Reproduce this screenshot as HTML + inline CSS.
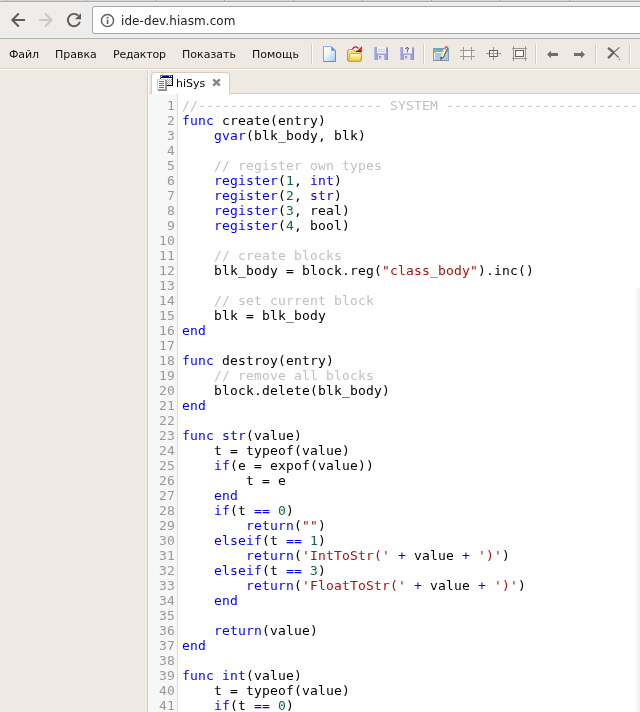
<!DOCTYPE html>
<html><head><meta charset="utf-8"><title>hiSys</title>
<style>
html,body{margin:0;padding:0;}
body{width:640px;height:712px;overflow:hidden;position:relative;background:#eee9e3;font-family:"DejaVu Sans","Liberation Sans",sans-serif;}
svg{position:absolute;overflow:visible;}
#tabstrip{position:absolute;left:0;top:0;width:640px;height:1px;background:#d9d9d9;border-bottom:1px solid #a9a9a9;}
#tabstrip i{position:absolute;top:0;width:1px;height:1px;background:#a9a9a9;}
#chrome{position:absolute;left:0;top:2px;width:640px;height:36px;background:#eeedeb;border-bottom:1px solid #b3b2b3;z-index:2;box-shadow:inset 0 1px 0 #f3f2f1;}
#url{position:absolute;left:92px;top:4px;width:560px;height:26px;background:#fff;border:1px solid #a6a6a6;border-radius:2.500px;}
#url span{position:absolute;left:28px;top:7px;letter-spacing:0.070px;font-size:12px;line-height:15px;color:#222;white-space:nowrap;}
#menubar{position:absolute;left:0;top:38px;width:640px;height:30px;background:#eee9e3;border-bottom:1px solid #dfd2c4;}
#menubar .m{position:absolute;top:10px;font-size:11px;line-height:13px;color:#111;white-space:nowrap;}
.sep{position:absolute;top:6px;width:1px;height:20px;background:#dacdbf;border-right:1px solid #fff;}
#hl{position:absolute;left:0;top:69px;width:640px;height:1px;background:#fff;}
#vsep{position:absolute;left:147px;top:70px;width:1px;height:642px;background:#dacdbf;border-right:1px solid #fff;}
#tabline{position:absolute;left:149px;top:93px;width:491px;height:1px;background:#dacdbf;}
#tab{position:absolute;left:151px;top:72px;width:79px;height:22px;background:#fff;border:1px solid #dacdbf;border-bottom:none;border-radius:4px 4px 0 0;box-sizing:border-box;}
#tab span{position:absolute;left:24px;top:4px;font-size:11px;line-height:13px;color:#000;}
#editor{position:absolute;left:148px;top:94px;width:492px;height:618px;background:#fff;}
#gutter{position:absolute;left:0;top:0;width:29px;height:618px;background:#f7f7f7;border-right:1px solid #ddd;}
#rstrip{position:absolute;left:488px;top:194px;width:4px;height:424px;background:linear-gradient(90deg,#f9f9f9,#f2f2f2);}
#code{position:absolute;left:0;top:4px;font-family:"DejaVu Sans Mono","Liberation Mono",monospace;font-size:13px;line-height:15px;letter-spacing:0.1733px;white-space:pre;color:#000;}
.ln{height:15px;position:relative;}
.no{position:absolute;left:0;width:27px;text-align:right;color:#999;}
.tx{position:absolute;left:34px;}
.c{color:#c0c0c0}.s{color:#a11}.n{color:#164}.k{color:#00f}.d{color:#00f}.t{color:#00d}
#root{position:absolute;left:0;top:0;width:640px;height:712px;will-change:transform;background:#eee9e3;}
</style></head><body><div id="root">
<div id="tabstrip"><i style="left:6px"></i><i style="left:86px"></i><i style="left:155px"></i><i style="left:224px"></i><i style="left:293px"></i><i style="left:362px"></i><i style="left:431px"></i><i style="left:500px"></i><i style="left:569px"></i></div>
<div id="chrome">
<svg style="left:0;top:0" width="92" height="36" viewBox="0 0 92 36"><g fill="none" stroke="#5d5d5d" stroke-width="2"><path d="M13.200 18H25M18.750 11.550L12.300 18L18.750 24.450"/></g><g fill="none" stroke="#c8c8c8" stroke-width="2"><path d="M39.200 18H50.800M45.150 11.550L51.600 18L45.150 24.450"/></g><path d="M78.330 13.670A6.125 6.125 0 1 0 79.870 19.750" fill="none" stroke="#5d5d5d" stroke-width="1.950"/><path d="M81 11.200V17.300H74.900Z" fill="#5d5d5d"/></svg>
<div id="url">
<svg style="left:6.500px;top:5.500px" width="15" height="15" viewBox="0 0 15 15"><circle cx="7.500" cy="7.500" r="6.050" fill="none" stroke="#626262" stroke-width="1.500"/><rect x="6.700" y="6.600" width="1.700" height="4.400" fill="#626262"/><rect x="6.700" y="3.900" width="1.700" height="1.600" fill="#626262"/></svg>
<span>ide-dev.hiasm.com</span></div>
</div>
<div id="menubar">
<span class="m" style="left:9px;letter-spacing:-0.150px">Файл</span>
<span class="m" style="left:55px">Правка</span>
<span class="m" style="left:113px;letter-spacing:-0.220px">Редактор</span>
<span class="m" style="left:182px">Показать</span>
<span class="m" style="left:252px">Помощь</span>
<div class="sep" style="left:311px"></div>
<div class="sep" style="left:423px"></div>
<div class="sep" style="left:535px"></div>
<div class="sep" style="left:595px"></div>
<div class="sep" style="left:629px"></div>
<svg style="left:321px;top:8px" width="16" height="16" viewBox="0 0 16 16"><defs><linearGradient id="gdoc" x1="0" y1="0" x2="1" y2="1"><stop offset="0" stop-color="#fffef2"/><stop offset="0.400" stop-color="#f2f6fa"/><stop offset="1" stop-color="#9ccaf0"/></linearGradient></defs><path d="M2.500 0.500H10.500L14.500 4.500V15.500H2.500Z" fill="url(#gdoc)" stroke="#9cb0ea" stroke-width="1"/><path d="M14.500 4.500V15.500H2.500" fill="none" stroke="#8080c8" stroke-width="1"/><path d="M2.500 15.500V0.500" fill="none" stroke="#8c9ce0" stroke-width="1"/><path d="M10.500 0.500V4.500H14.500Z" fill="#4f93ec" stroke="#7c98e2" stroke-width="0.600"/></svg>
<svg style="left:347px;top:8px" width="16" height="16" viewBox="0 0 16 16"><defs><linearGradient id="gfol" x1="0" y1="0" x2="0" y2="1"><stop offset="0" stop-color="#fffde6"/><stop offset="0.450" stop-color="#fbe684"/><stop offset="1" stop-color="#ecc648"/></linearGradient></defs><path d="M0.500 5.500Q0.500 3.500 2.500 3.500H5.500Q6.500 3.500 7 4.500Q7.300 5.500 8.500 5.500H12Q13.500 5.500 13.500 7V7.500Q14.800 7.700 14.500 9V13.500Q14.500 15.500 12.500 15.500H2.500Q0.500 15.500 0.500 13.500Z" fill="#f6dc74" stroke="#c69c1a" stroke-width="1"/><path d="M1.800 5.200Q2 4.600 2.800 4.600H5.200" fill="none" stroke="#fffbe0" stroke-width="1"/><path d="M3.600 7.500H13.500Q14.700 7.500 14.500 9L13.800 14Q13.600 15.300 12.200 15.300H2.800Q1.500 15.300 1.800 14L2.600 8.600Q2.800 7.500 3.600 7.500Z" fill="url(#gfol)" stroke="#cca422" stroke-width="0.900"/><path d="M5.400 2.800Q8.200 -1 11.400 2.400" fill="none" stroke="#c01414" stroke-width="1.300"/><path d="M10.300 4.900L14.900 -0.100V4.900Z" fill="#e81c10"/><path d="M13.200 4.500L14.300 2.500V4.500Z" fill="#ff7a18"/><path d="M9 5.300H14.900" stroke="#181010" stroke-width="1"/></svg>
<svg style="left:373px;top:8px" width="16" height="16" viewBox="0 0 16 16"><path d="M1 1H14L15 2V14H2L1 13Z" fill="#9f9fda"/><rect x="1" y="1" width="1.200" height="12" fill="#b9b9e8"/><rect x="13.800" y="2" width="1.200" height="12" fill="#8b8bcb"/><rect x="4" y="1" width="9" height="6.500" fill="#f1f1f1"/><rect x="5" y="3" width="7" height="0.800" fill="#c4c4cf"/><rect x="5" y="5" width="7" height="0.800" fill="#c4c4cf"/><rect x="5" y="9" width="6.300" height="5" fill="#e6e6e8"/><path d="M6 10H8.200V10.500L6 13Z" fill="#9090d4"/><path d="M8.200 10.500V13H6Z" fill="#b4b4e4"/></svg>
<svg style="left:399px;top:8px" width="16" height="16" viewBox="0 0 16 16"><path d="M1 1H14L15 2V14H2L1 13Z" fill="#9f9fda"/><rect x="1" y="1" width="1.200" height="12" fill="#b9b9e8"/><rect x="13.800" y="2" width="1.200" height="12" fill="#8b8bcb"/><rect x="4" y="1" width="9" height="6.500" fill="#f1f1f1"/><path d="M6.700 3Q6.900 1.700 8.100 1.700Q9.500 1.700 9.500 2.700Q9.500 3.400 8.400 4V4.800M8.400 5.500V6.400" fill="none" stroke="#333" stroke-width="1"/><path d="M4.300 5.200H6.200" stroke="#c4c4cf" stroke-width="0.800"/><rect x="5" y="9" width="6.300" height="5" fill="#e6e6e8"/><path d="M6 10H8.200V10.500L6 13Z" fill="#9090d4"/><path d="M8.200 10.500V13H6Z" fill="#b4b4e4"/></svg>
<svg style="left:433px;top:8px" width="16" height="16" viewBox="0 0 16 16"><rect x="0.500" y="2.500" width="15" height="12" fill="#afc5e5" stroke="#7d9fba" stroke-width="1"/><path d="M0.500 14.500H15.500" stroke="#8f9296" stroke-width="1"/><rect x="1" y="3" width="14" height="3" fill="#5ab8c1"/><rect x="2" y="4" width="1.300" height="1.200" fill="#e6c450"/><rect x="1.200" y="6" width="1.600" height="1" fill="#e6c450"/><path d="M1.500 7V13.800" stroke="#e2f5f8" stroke-width="1"/><path d="M2.800 6.500H13" stroke="#e6f7fb" stroke-width="1"/><path d="M11.010 2.630L13.750 3.850L10.270 11.610L7.530 10.390Z" fill="#fdfdf4"/><path d="M11.500 2.850L8.020 10.600" stroke="#f5ea30" stroke-width="1.200"/><path d="M13.750 3.850L10.270 11.610" stroke="#58524c" stroke-width="1"/><path d="M7.530 10.390L10.270 11.610L7.400 14.500Z" fill="#57514b"/><path d="M11.010 2.630L12 0.400Q12.600 -0.300 13.700 0.100Q15 0.600 14.900 1.600L13.750 3.850Z" fill="#e2544e"/><path d="M12.500 2.900L13.900 3.500L14.400 2.300L13.200 1.600Z" fill="#fff"/><path d="M14.900 1.600L13.750 3.850" stroke="#58524c" stroke-width="0.800"/></svg>
<svg style="left:459px;top:8px" width="16" height="16" viewBox="0 0 16 16" shape-rendering="crispEdges"><rect x="5" y="5" width="7" height="5" fill="#f8f4f0"/><rect x="4" y="1" width="1" height="13" fill="#9c9894"/><rect x="12" y="1" width="1" height="13" fill="#9c9894"/><rect x="1" y="4" width="15" height="1" fill="#9c9894"/><rect x="1" y="10" width="15" height="1" fill="#9c9894"/></svg>
<svg style="left:485px;top:8px" width="16" height="16" viewBox="0 0 16 16" shape-rendering="crispEdges"><rect x="4" y="4" width="9" height="7" fill="#f8f4f0"/><rect x="8" y="1" width="1" height="13" fill="#9c9894"/><rect x="1" y="7" width="15" height="1" fill="#9c9894"/><path d="M4 4H13V11H4ZM5 5V10H12V5Z" fill="#66625e" fill-rule="evenodd"/></svg>
<svg style="left:511px;top:8px" width="16" height="16" viewBox="0 0 16 16" shape-rendering="crispEdges"><rect x="2" y="0" width="1" height="15" fill="#9c9894"/><rect x="14" y="0" width="1" height="15" fill="#9c9894"/><rect x="1" y="2" width="15" height="1" fill="#9c9894"/><rect x="1" y="12" width="15" height="1" fill="#9c9894"/><rect x="5" y="5" width="7" height="5" fill="#f8f4f0"/><path d="M4 4H13V11H4ZM5 5V10H12V5Z" fill="#66625e" fill-rule="evenodd"/></svg>
<svg style="left:545px;top:8px" width="16" height="16" viewBox="0 0 16 16"><path d="M2 8.500L6 4.800V7H13V10H6V12.200Z" fill="#716d69"/></svg>
<svg style="left:571px;top:8px" width="16" height="16" viewBox="0 0 16 16"><path d="M14 8.500L10 4.800V7H3V10H10V12.200Z" fill="#716d69"/></svg>
<svg style="left:605px;top:8px" width="16" height="16" viewBox="0 0 16 16"><path d="M3.100 1.900L8.750 6.500M3.100 12.100L8.750 6.500" stroke="#6a6662" stroke-width="2.400" fill="none"/><path d="M8.500 6.700L14.400 1.400M8.500 6.300L13.500 11.500" stroke="#6a6662" stroke-width="1.100" fill="none"/><circle cx="14.450" cy="13.400" r="0.650" fill="#6a6662"/></svg>

</div>
<div id="hl"></div>
<div id="vsep"></div>
<div id="tabline"></div>
<div id="tab"><svg style="left:5px;top:2px" width="16" height="16" viewBox="0 0 16 16" shape-rendering="crispEdges"><rect x="3" y="0" width="13" height="11" fill="#000"/><rect x="3" y="0" width="12" height="1" fill="#6e6e6e"/><rect x="3" y="0" width="1" height="10" fill="#6e6e6e"/><rect x="4" y="1" width="11" height="2" fill="#00008c"/><rect x="4" y="3" width="11" height="7" fill="#fff"/><rect x="4" y="1" width="1" height="1" fill="#fff"/><rect x="12" y="1" width="1" height="1" fill="#fff"/><rect x="14" y="1" width="1" height="1" fill="#fff"/><rect x="4" y="4" width="1" height="1" fill="#a8a8a8"/><rect x="6" y="4" width="1" height="1" fill="#a8a8a8"/><rect x="8" y="4" width="1" height="1" fill="#a8a8a8"/><rect x="10" y="4" width="1" height="1" fill="#a8a8a8"/><rect x="12" y="4" width="1" height="1" fill="#a8a8a8"/><rect x="14" y="4" width="1" height="1" fill="#a8a8a8"/><rect x="5" y="5" width="1" height="1" fill="#a8a8a8"/><rect x="7" y="5" width="1" height="1" fill="#a8a8a8"/><rect x="9" y="5" width="1" height="1" fill="#a8a8a8"/><rect x="11" y="5" width="1" height="1" fill="#a8a8a8"/><rect x="13" y="5" width="1" height="1" fill="#a8a8a8"/><rect x="4" y="6" width="1" height="1" fill="#a8a8a8"/><rect x="6" y="6" width="1" height="1" fill="#a8a8a8"/><rect x="8" y="6" width="1" height="1" fill="#a8a8a8"/><rect x="10" y="6" width="1" height="1" fill="#a8a8a8"/><rect x="12" y="6" width="1" height="1" fill="#a8a8a8"/><rect x="14" y="6" width="1" height="1" fill="#a8a8a8"/><rect x="5" y="7" width="1" height="1" fill="#a8a8a8"/><rect x="7" y="7" width="1" height="1" fill="#a8a8a8"/><rect x="9" y="7" width="1" height="1" fill="#a8a8a8"/><rect x="11" y="7" width="1" height="1" fill="#a8a8a8"/><rect x="13" y="7" width="1" height="1" fill="#a8a8a8"/><rect x="4" y="8" width="1" height="1" fill="#a8a8a8"/><rect x="6" y="8" width="1" height="1" fill="#a8a8a8"/><rect x="8" y="8" width="1" height="1" fill="#a8a8a8"/><rect x="10" y="8" width="1" height="1" fill="#a8a8a8"/><rect x="12" y="8" width="1" height="1" fill="#a8a8a8"/><rect x="14" y="8" width="1" height="1" fill="#a8a8a8"/><rect x="5" y="9" width="1" height="1" fill="#a8a8a8"/><rect x="7" y="9" width="1" height="1" fill="#a8a8a8"/><rect x="9" y="9" width="1" height="1" fill="#a8a8a8"/><rect x="11" y="9" width="1" height="1" fill="#a8a8a8"/><rect x="13" y="9" width="1" height="1" fill="#a8a8a8"/><rect x="1" y="5" width="9" height="11" fill="#8c8c8c"/><rect x="0" y="4" width="9" height="11" fill="#d0d0d0"/><rect x="1" y="5" width="7" height="9" fill="#fff"/><rect x="8" y="5" width="1" height="10" fill="#a0a0a0"/><rect x="1" y="14" width="8" height="1" fill="#a0a0a0"/><rect x="2" y="6" width="5" height="1" fill="#727272"/><rect x="2" y="8" width="5" height="1" fill="#727272"/><rect x="2" y="10" width="5" height="1" fill="#727272"/><rect x="2" y="12" width="5" height="1" fill="#727272"/></svg><span>hiSys</span><svg style="left:60.400px;top:5px" width="9" height="9" viewBox="0 0 9 9"><path d="M1.250 1.400L7.750 7.600M7.750 1.400L1.250 7.600" stroke="#858585" stroke-width="2.500" stroke-linecap="butt"/></svg>
</div>
<div id="editor"><div id="gutter"></div><div id="rstrip"></div>
<div id="code"><div class="ln"><span class="no">1</span><span class="tx"><span class="c">//----------------------- SYSTEM ---------------------------------</span></span></div><div class="ln"><span class="no">2</span><span class="tx"><span class="k">func</span> create(entry)</span></div><div class="ln"><span class="no">3</span><span class="tx">    <span class="d">gvar</span>(blk_body, blk)</span></div><div class="ln"><span class="no">4</span><span class="tx"></span></div><div class="ln"><span class="no">5</span><span class="tx">    <span class="c">// register own types</span></span></div><div class="ln"><span class="no">6</span><span class="tx">    <span class="d">register</span>(<span class="n">1</span>, <span class="t">int</span>)</span></div><div class="ln"><span class="no">7</span><span class="tx">    <span class="d">register</span>(<span class="n">2</span>, <span class="t">str</span>)</span></div><div class="ln"><span class="no">8</span><span class="tx">    <span class="d">register</span>(<span class="n">3</span>, real)</span></div><div class="ln"><span class="no">9</span><span class="tx">    <span class="d">register</span>(<span class="n">4</span>, bool)</span></div><div class="ln"><span class="no">10</span><span class="tx"></span></div><div class="ln"><span class="no">11</span><span class="tx">    <span class="c">// create blocks</span></span></div><div class="ln"><span class="no">12</span><span class="tx">    blk_body = block.reg(<span class="s">&quot;class_body&quot;</span>).inc()</span></div><div class="ln"><span class="no">13</span><span class="tx"></span></div><div class="ln"><span class="no">14</span><span class="tx">    <span class="c">// set current block</span></span></div><div class="ln"><span class="no">15</span><span class="tx">    blk = blk_body</span></div><div class="ln"><span class="no">16</span><span class="tx"><span class="k">end</span></span></div><div class="ln"><span class="no">17</span><span class="tx"></span></div><div class="ln"><span class="no">18</span><span class="tx"><span class="k">func</span> destroy(entry)</span></div><div class="ln"><span class="no">19</span><span class="tx">    <span class="c">// remove all blocks</span></span></div><div class="ln"><span class="no">20</span><span class="tx">    block.delete(blk_body)</span></div><div class="ln"><span class="no">21</span><span class="tx"><span class="k">end</span></span></div><div class="ln"><span class="no">22</span><span class="tx"></span></div><div class="ln"><span class="no">23</span><span class="tx"><span class="k">func</span> <span class="t">str</span>(value)</span></div><div class="ln"><span class="no">24</span><span class="tx">    t = typeof(value)</span></div><div class="ln"><span class="no">25</span><span class="tx">    <span class="k">if</span>(e = expof(value))</span></div><div class="ln"><span class="no">26</span><span class="tx">        t = e</span></div><div class="ln"><span class="no">27</span><span class="tx">    <span class="k">end</span></span></div><div class="ln"><span class="no">28</span><span class="tx">    <span class="k">if</span>(t <span class="k">==</span> <span class="n">0</span>)</span></div><div class="ln"><span class="no">29</span><span class="tx">        <span class="k">return</span>(<span class="s">&quot;&quot;</span>)</span></div><div class="ln"><span class="no">30</span><span class="tx">    <span class="k">elseif</span>(t <span class="k">==</span> <span class="n">1</span>)</span></div><div class="ln"><span class="no">31</span><span class="tx">        <span class="k">return</span>(<span class="s">&#x27;IntToStr(&#x27;</span> <span class="k">+</span> value <span class="k">+</span> <span class="s">&#x27;)&#x27;</span>)</span></div><div class="ln"><span class="no">32</span><span class="tx">    <span class="k">elseif</span>(t <span class="k">==</span> <span class="n">3</span>)</span></div><div class="ln"><span class="no">33</span><span class="tx">        <span class="k">return</span>(<span class="s">&#x27;FloatToStr(&#x27;</span> <span class="k">+</span> value <span class="k">+</span> <span class="s">&#x27;)&#x27;</span>)</span></div><div class="ln"><span class="no">34</span><span class="tx">    <span class="k">end</span></span></div><div class="ln"><span class="no">35</span><span class="tx"></span></div><div class="ln"><span class="no">36</span><span class="tx">    <span class="k">return</span>(value)</span></div><div class="ln"><span class="no">37</span><span class="tx"><span class="k">end</span></span></div><div class="ln"><span class="no">38</span><span class="tx"></span></div><div class="ln"><span class="no">39</span><span class="tx"><span class="k">func</span> <span class="t">int</span>(value)</span></div><div class="ln"><span class="no">40</span><span class="tx">    t = typeof(value)</span></div><div class="ln"><span class="no">41</span><span class="tx">    <span class="k">if</span>(t <span class="k">==</span> <span class="n">0</span>)</span></div><div class="ln"><span class="no">42</span><span class="tx">        <span class="k">return</span>(<span class="n">0</span>)</span></div></div></div>
</div></body></html>
